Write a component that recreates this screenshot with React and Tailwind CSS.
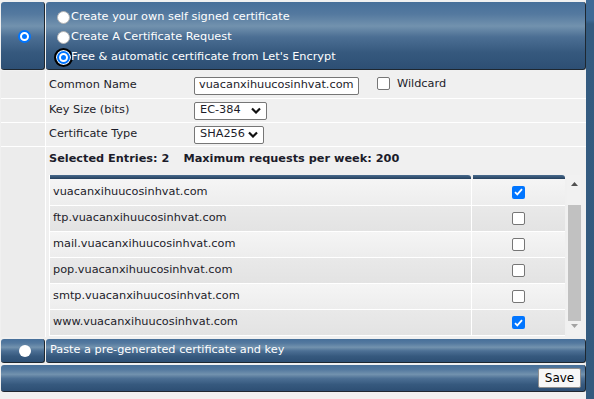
import { useState } from "react";

const blueBar =
  "bg-[linear-gradient(to_bottom,#466f99_0%,#54799f_18%,#7292ae_36%,#4c6f94_52%,#36597e_75%,#2d4f74_100%)] border-r border-b border-[#1e2730] rounded-[3px]";

const domains = [
  { name: "vuacanxihuucosinhvat.com", on: true },
  { name: "ftp.vuacanxihuucosinhvat.com", on: false },
  { name: "mail.vuacanxihuucosinhvat.com", on: false },
  { name: "pop.vuacanxihuucosinhvat.com", on: false },
  { name: "smtp.vuacanxihuucosinhvat.com", on: false },
  { name: "www.vuacanxihuucosinhvat.com", on: true },
];

function Chevron() {
  return (
    <svg width="10" height="7" viewBox="0 0 10 7" className="ml-auto">
      <path d="M1 1.5 L5 5.5 L9 1.5" fill="none" stroke="#111" strokeWidth="2.2" />
    </svg>
  );
}

function Select({ value, width }) {
  return (
    <div
      className={`flex h-[18px] items-center rounded-[2px] border border-[#767676] bg-white pl-[5px] pr-[5px] ${width}`}
    >
      <span>{value}</span>
      <Chevron />
    </div>
  );
}

function Radio({ checked, focus }) {
  return (
    <span
      className={`flex h-[15px] w-[15px] shrink-0 items-center justify-center rounded-full ${
        focus ? "outline-2 outline-black bg-white" : ""
      }`}
    >
      {checked ? (
        <span className="flex h-[13px] w-[13px] items-center justify-center rounded-full bg-[#0075ff]">
          <span className="h-[9px] w-[9px] rounded-full border-2 border-white bg-[#0075ff]" />
        </span>
      ) : (
        <span className="h-[13px] w-[13px] rounded-full border border-[#b5b5b5] bg-white" />
      )}
    </span>
  );
}

function Box({ checked }) {
  if (checked) {
    return (
      <span className="flex h-[13px] w-[13px] items-center justify-center rounded-[2px] bg-[#0075ff]">
        <svg width="9" height="8" viewBox="0 0 9 8">
          <path d="M1 4.2 L3.3 6.4 L8 1.2" fill="none" stroke="white" strokeWidth="1.8" />
        </svg>
      </span>
    );
  }
  return <span className="block h-[13px] w-[13px] rounded-[2px] border border-[#767676] bg-white" />;
}

export default function App() {
  const [rows] = useState(domains);

  return (
    <div className="flex h-[399px] w-[594px] overflow-hidden bg-[#f0f0f0] font-['DejaVu_Sans',Verdana,sans-serif] text-[11.3px] text-[#1c1c2a]">
      <div className="w-[586px] pl-[1px] pt-[2px]">
        {/* option row */}
        <div className="flex h-[68px] gap-[1px]">
          <div className={`flex w-[44px] items-center justify-center pl-[4px] pt-[2px] ${blueBar}`}>
            <Radio checked />
          </div>
          <div className={`flex flex-1 flex-col gap-[5px] pl-[10px] pt-[8px] text-white ${blueBar}`}>
            <div className="flex h-[15px] items-center">
              <Radio />
              <span>Create your own self signed certificate</span>
            </div>
            <div className="flex h-[15px] items-center">
              <Radio />
              <span>Create A Certificate Request</span>
            </div>
            <div className="flex h-[15px] items-center">
              <Radio checked focus />
              <span>Free &amp; automatic certificate from Let's Encrypt</span>
            </div>
          </div>
        </div>

        {/* form */}
        <div className="mt-[1px] flex flex-col">
          <div className="flex h-[28px] border-b border-white">
            <div className="w-[44px] bg-[#ececec]" />
            <div className="flex flex-1 items-center border-l border-white bg-[#f0f0f0] pl-[3px] pt-[2px]">
              <span className="w-[145px]">Common Name</span>
              <div className="flex h-[18px] w-[165px] items-center rounded-[2px] border border-[#767676] bg-white pl-[4px]">
                vuacanxihuucosinhvat.com
              </div>
              <span className="mb-[4px] ml-[18px] mr-[7px]">
                <Box />
              </span>
              <span className="mb-[3px]">Wildcard</span>
            </div>
          </div>
          <div className="flex h-[24px] border-b border-white">
            <div className="w-[44px] bg-[#ececec]" />
            <div className="flex flex-1 items-center border-l border-white pl-[3px]">
              <span className="w-[145px]">Key Size (bits)</span>
              <Select value="EC-384" width="w-[73px]" />
            </div>
          </div>
          <div className="flex h-[24px] border-b border-white">
            <div className="w-[44px] bg-[#ececec]" />
            <div className="flex flex-1 items-center border-l border-white pl-[3px]">
              <span className="w-[145px]">Certificate Type</span>
              <Select value="SHA256" width="w-[70px]" />
            </div>
          </div>
          <div className="flex h-[190px]">
            <div className="w-[44px] bg-[#ececec]" />
            <div className="flex flex-1 flex-col border-l border-white pl-[3px]">
              <div className="flex h-[24px] items-center gap-[14px] pt-[1px] font-bold">
                <span>Selected Entries: 2</span>
                <span>Maximum requests per week: 200</span>
              </div>
              <div className="mt-[4px] flex">
                <div className="w-[516px] border-b border-l border-white">
                  <div className="flex h-[4px]">
                    <div className="flex-1 rounded-tr-[3px] bg-[linear-gradient(to_bottom,#4a6c8e,#243f5c)]" />
                    <div className="ml-[2px] w-[92px] rounded-tr-[3px] bg-[linear-gradient(to_bottom,#4a6c8e,#243f5c)]" />
                  </div>
                  {rows.map((r, i) => (
                    <div
                      key={r.name}
                      className={`flex h-[26px] border-t border-white ${
                        i % 2 === 0
                          ? "bg-[linear-gradient(to_bottom,#f5f5f5,#ededed)]"
                          : "bg-[linear-gradient(to_bottom,#e9e9e9,#e3e3e3)]"
                      } ${i === 0 ? "border-t-0" : ""}`}
                    >
                      <div className="flex flex-1 items-center pl-[3px]">{r.name}</div>
                      <div className="flex w-[94px] items-center justify-center border-l border-white">
                        <Box checked={r.on} />
                      </div>
                    </div>
                  ))}
                </div>
                <div className="ml-[2px] flex w-[14px] flex-col items-center bg-[#f1f1f1] pt-[7px]">
                  <svg width="7" height="4" viewBox="0 0 7 4">
                    <path d="M0 4 L3.5 0 L7 4 Z" fill="#505050" />
                  </svg>
                  <div className="mt-[19px] h-[116px] w-[13px] bg-[#c1c1c1]" />
                  <svg width="7" height="4" viewBox="0 0 7 4" className="mt-[3px]">
                    <path d="M0 0 L3.5 4 L7 0 Z" fill="#a3a3a3" />
                  </svg>
                </div>
              </div>
            </div>
          </div>
        </div>

        {/* paste row */}
        <div className="mt-[2px] flex h-[24px] gap-[1px]">
          <div className={`flex w-[44px] items-center justify-center pl-[4px] ${blueBar}`}>
            <span className="h-[12px] w-[12px] rounded-full bg-white" />
          </div>
          <div className={`flex flex-1 items-center pl-[4px] text-white ${blueBar}`}>
            Paste a pre-generated certificate and key
          </div>
        </div>

        {/* save row */}
        <div className={`mt-[2px] flex h-[27px] items-center justify-end pr-[4px] ${blueBar}`}>
          <button className="h-[20px] w-[43px] rounded-[2px] border border-[#8f8f8f] bg-[#f7f7f7] text-[12px] text-black">
            Save
          </button>
        </div>
      </div>
      <div className="w-[8px] bg-[linear-gradient(to_bottom,#3e6a96_0%,#3e6a96_5%,#345b80_6%,#335a7e_100%)]" />
    </div>
  );
}
